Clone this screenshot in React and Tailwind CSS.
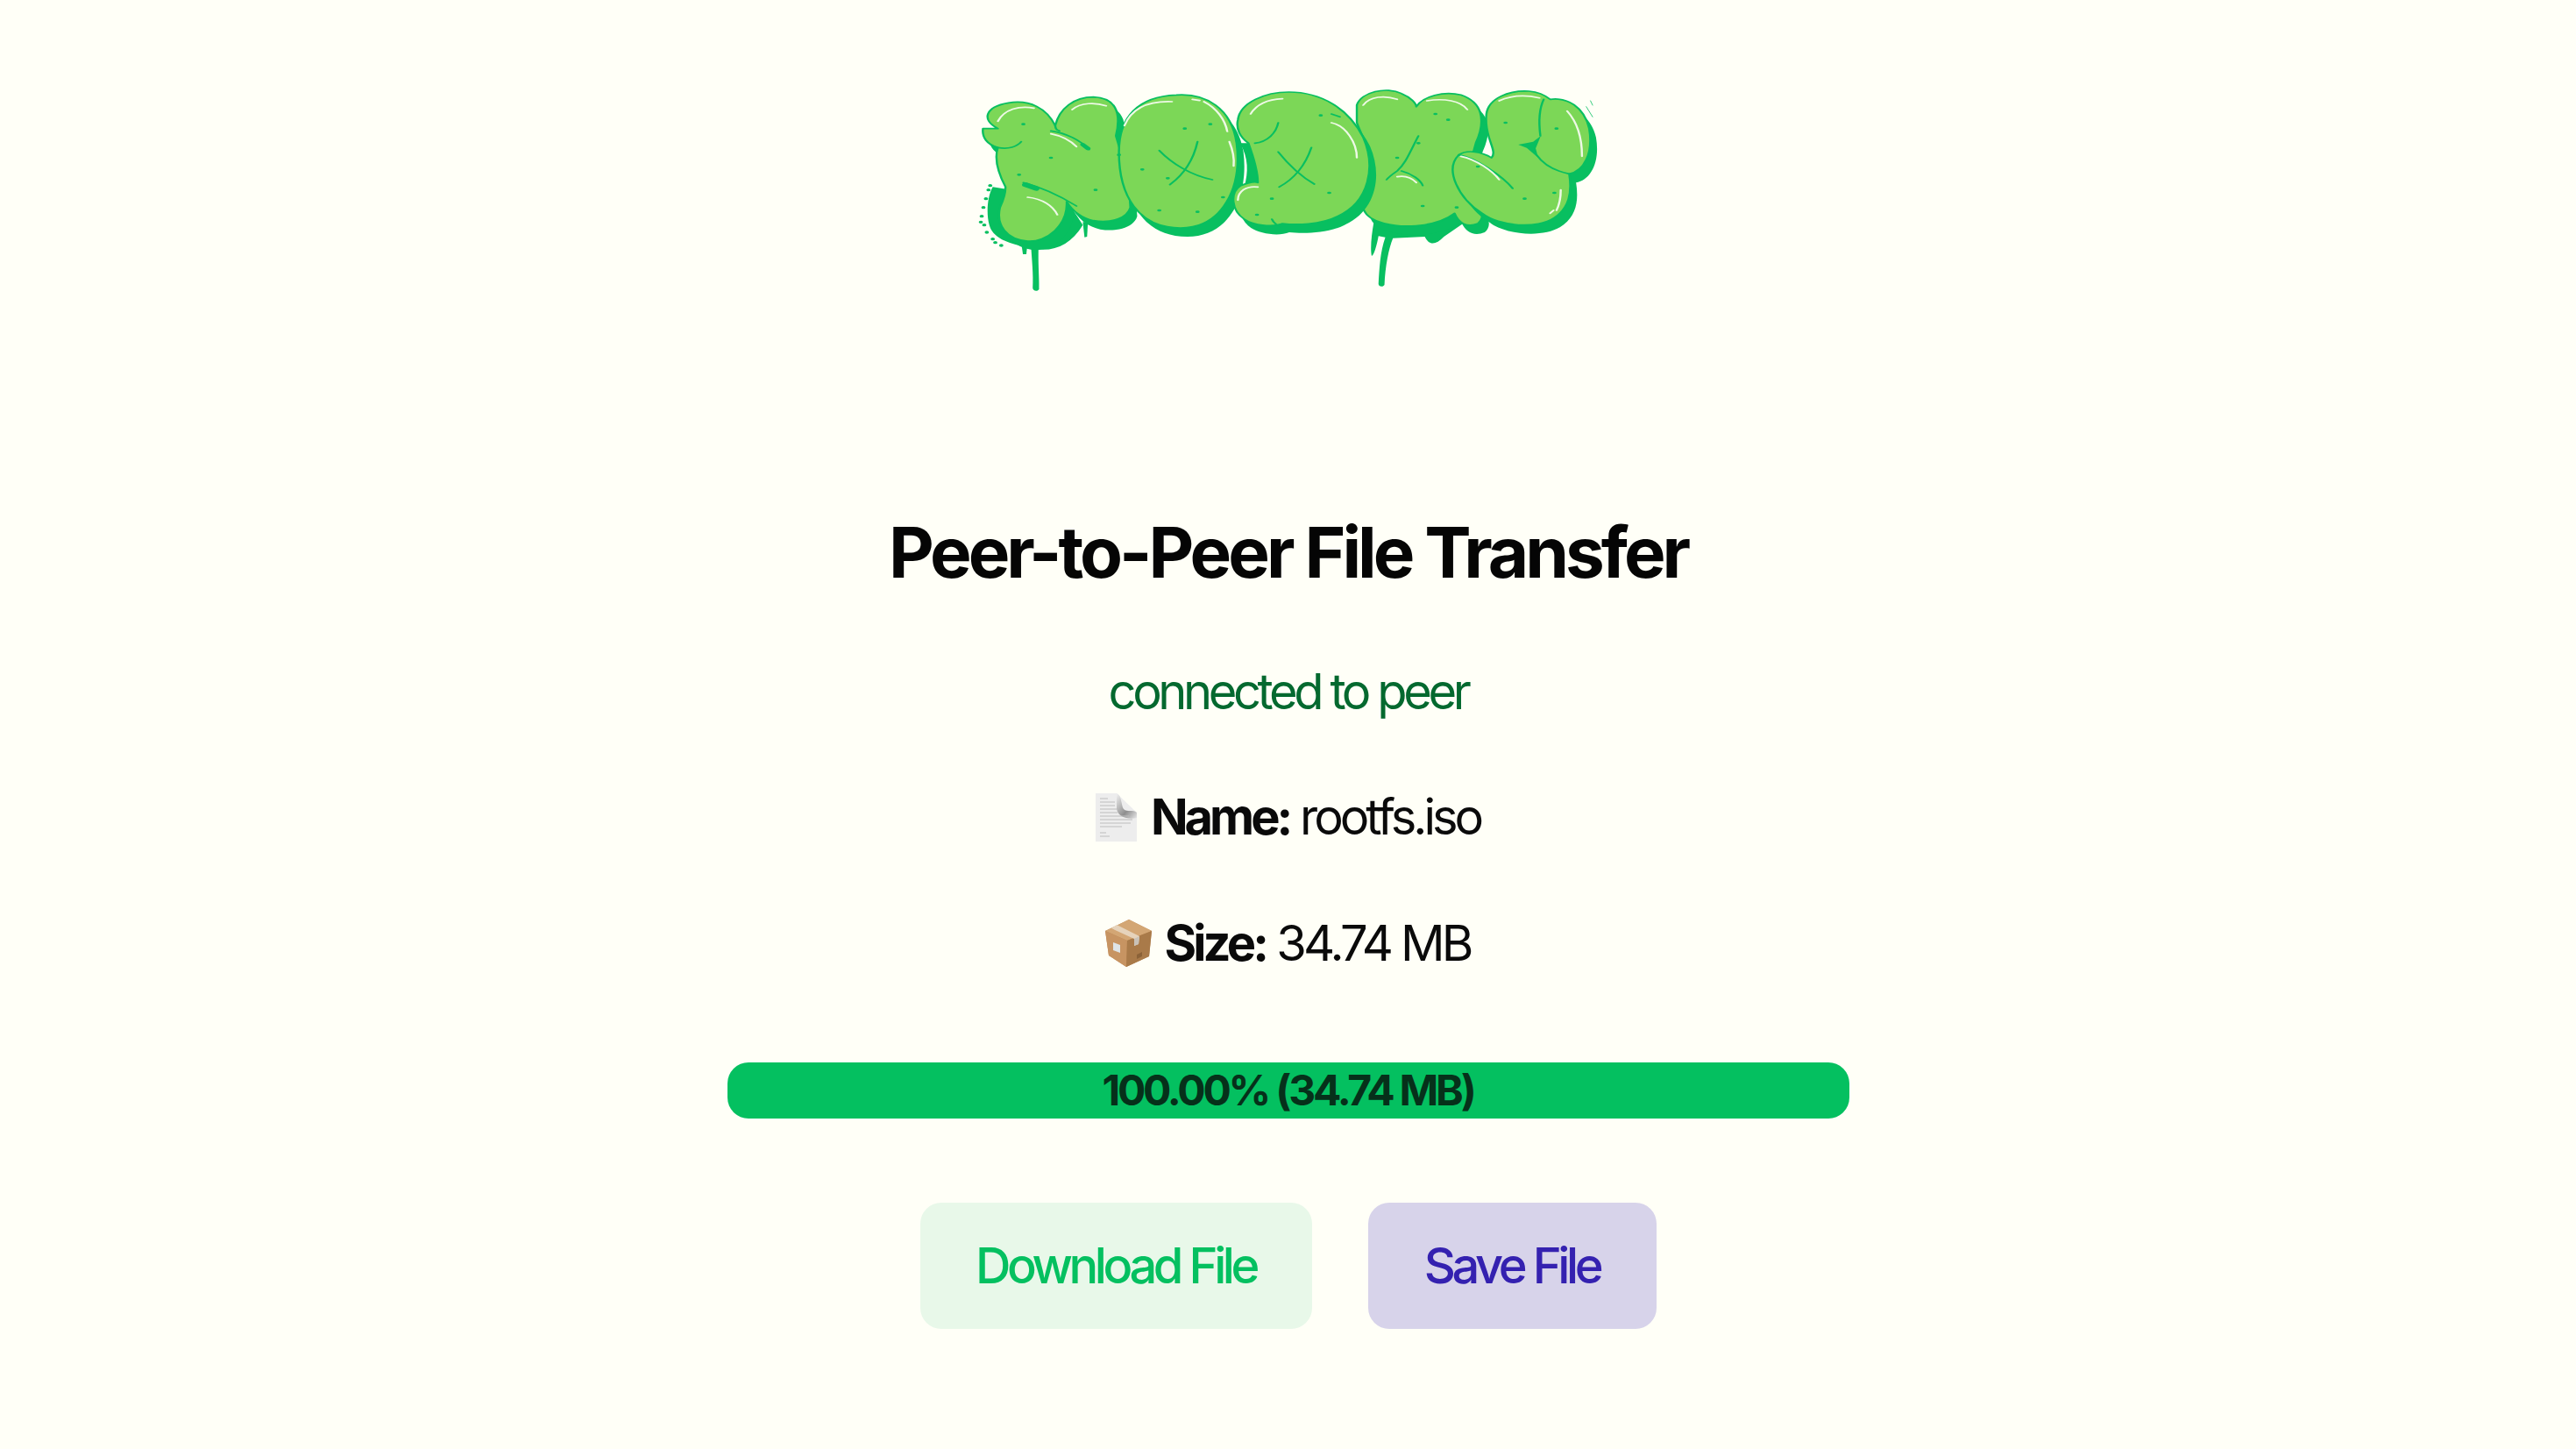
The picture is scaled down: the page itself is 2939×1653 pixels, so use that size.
const BODY = "#7cd757";
const DARK = "#08bf60";

// Letters in drawing order, so each one's shadow falls on the letter behind it.
const letters = [
  // N
  "M100 200 C60 170 70 125 125 112 C175 100 215 130 235 190 C245 130 280 92 325 92 C375 95 392 140 378 225 C395 300 410 400 412 470 C405 505 370 525 325 515 C295 505 275 480 262 450 C265 530 215 590 170 585 C120 580 95 530 105 470 C115 440 118 420 118 400 C100 350 92 300 100 265 C75 255 62 230 65 200 Z",
  // O
  "M385 280 C385 160 430 90 520 85 C590 78 650 130 662 250 C675 400 630 540 530 540 C430 540 385 430 385 280 Z",
  // U
  "M945 120 C955 75 1015 55 1050 80 C1072 93 1085 115 1085 125 C1100 90 1150 70 1190 85 C1240 110 1250 170 1225 250 C1215 300 1205 360 1200 420 C1240 460 1250 500 1230 525 C1205 540 1185 525 1175 490 C1130 540 1040 545 990 515 C950 490 950 440 975 390 C1000 330 960 240 945 180 Z",
  // D
  "M665 170 C670 110 730 75 785 75 C860 75 925 130 960 230 C990 330 975 450 900 500 C860 530 800 530 770 525 C745 540 700 530 680 510 C650 480 645 420 672 395 C690 385 705 380 712 385 C712 340 700 290 690 250 C670 230 660 200 665 170 Z",
  // S
  "M1250 150 C1255 95 1305 68 1350 72 C1375 75 1390 88 1400 100 C1440 92 1480 125 1492 200 C1502 285 1480 345 1445 355 C1452 420 1445 470 1410 505 C1370 545 1280 535 1240 490 C1185 440 1150 340 1185 290 C1205 270 1240 280 1262 300 C1272 285 1262 260 1256 230 C1250 200 1248 175 1250 150 Z",
];

const innerLines = [
  "M100 265 C125 272 145 262 155 245",
  "M225 208 C260 215 295 240 315 272",
  "M160 385 C200 400 240 425 285 465",
  "M235 190 C236 200 237 205 245 208",
  "M480 275 C510 320 555 360 605 375",
  "M570 245 C560 310 535 360 505 392",
  "M760 280 C785 325 815 365 845 390",
  "M838 265 C825 320 800 370 762 400",
  "M760 180 C755 215 735 245 705 250",
  "M1090 225 C1070 280 1060 320 1040 345 C1030 355 1020 365 1015 375",
  "M1050 345 C1075 355 1095 375 1100 395",
  "M1385 100 C1375 130 1373 180 1377 225",
  "M1368 290 C1385 325 1410 345 1445 355",
  "M1185 290 C1225 300 1290 365 1312 405",
  "M745 510 C748 520 755 530 765 535",
  "M885 150 L905 160",
];

const highlights = [
  "M100 175 C115 135 150 120 185 130",
  "M275 135 C295 110 330 110 355 122",
  "M225 218 C250 225 270 240 285 262",
  "M170 435 C205 440 230 465 240 495",
  "M398 190 C415 130 455 105 510 108",
  "M558 100 L575 104",
  "M585 108 C615 130 635 170 640 210",
  "M645 245 C652 270 657 300 655 328",
  "M695 150 C710 115 735 100 770 98",
  "M885 180 C920 190 945 250 945 300",
  "M665 445 C665 415 685 395 712 400",
  "M960 120 C975 90 1010 85 1040 100",
  "M1110 105 C1150 95 1190 105 1205 135",
  "M1040 365 C1060 360 1075 370 1085 385",
  "M1280 105 C1310 85 1345 85 1375 95",
  "M1440 140 C1465 180 1475 240 1475 295",
  "M1190 295 C1225 305 1265 345 1280 375",
  "M1425 410 C1425 440 1420 465 1415 480",
  "M1400 490 L1408 480",
];

const specks = [
  [160,185],[150,358],[385,290],[440,340],[500,370],[600,185],[570,485],[630,435],[1130,150],[1160,170],[1100,465],[1415,200],[1410,420],[710,495],[745,440],[880,420],[330,410],[225,300],[1040,300],[1230,330],[1180,470],[1340,440],[860,155],[540,200],[480,480],[1295,180],[1090,250],
];

const spray = [
  [78,410],[72,440],[66,470],[62,500],[68,530],[74,555],[88,578],[60,520],[82,395],[94,590],[108,600],
];

function Logo() {
  return (
    <svg viewBox="0 0 1568 810" preserveAspectRatio="none" className="block w-[760px] h-[270px]">
      <g fill={DARK}>
        <path d="M88 400 C72 440 72 520 86 550 C104 590 150 600 180 610 C230 625 270 600 300 530 L260 440 Z" />
        {spray.map(([x, y], i) => (
          <circle key={i} cx={x} cy={y} r="5" />
        ))}
        <path d="M178 600 L196 600 C194 650 198 720 197 750 C192 760 182 755 182 745 C184 700 180 650 178 600 Z" />
        <path d="M155 590 L170 590 L167 630 L159 630 Z" />
        <path d="M300 520 L312 520 L310 570 L304 572 Z" />
        <path d="M985 520 C980 560 976 610 980 636 C985 635 992 600 996 568 L1012 572 C1000 620 998 680 996 730 C995 740 1005 745 1010 735 C1012 670 1020 610 1030 575 L1105 570 C1115 600 1130 600 1150 570 L1200 520 Z" />
        <path d="M670 250 L720 250 C715 300 720 360 722 400 L680 400 C690 350 690 300 670 250 Z" />
      </g>
      {letters.map((d, i) => (
        <g key={i}>
          <path d={d} fill={DARK} transform="translate(16 30)" />
          <path d={d} fill={BODY} stroke={DARK} strokeWidth="5" strokeLinejoin="round" />
        </g>
      ))}
      <g fill="none" stroke={DARK} strokeWidth="5" strokeLinecap="round">
        {innerLines.map((d, i) => (
          <path key={i} d={d} />
        ))}
        <path d="M165 392 L190 405" strokeWidth="16" />
        <path d="M300 255 L312 268" strokeWidth="12" />
        <path d="M1495 105 L1500 120 M1485 125 L1500 160" strokeWidth="2" />
      </g>
      <path d="M1325 255 L1360 245 L1378 225 L1366 268 L1372 300 L1345 266 Z" fill={DARK} />
      <g fill="none" stroke="#eef9e6" strokeWidth="5" strokeLinecap="round">
        {highlights.map((d, i) => (
          <path key={i} d={d} />
        ))}
      </g>
      <g fill={DARK}>
        {specks.map(([x, y], i) => (
          <ellipse key={i} cx={x} cy={y} rx="5" ry="4" />
        ))}
      </g>
    </svg>
  );
}

function DocIcon() {
  return (
    <svg viewBox="0 0 47 55" className="w-[47px] h-[55px] shrink-0">
      <defs>
        <linearGradient id="fold" x1="0" y1="0" x2="1" y2="1">
          <stop offset="0" stopColor="#f2f2f2" />
          <stop offset="0.6" stopColor="#8e8e8e" />
          <stop offset="1" stopColor="#e6e6e6" />
        </linearGradient>
      </defs>
      <path d="M0 0 H24 L47 22 V55 H0 Z" fill="#ededed" />
      <path d="M24 0 C30 2 29 14 32 18 C36 22 43 18 47 22 V28 C38 30 26 28 24 18 Z" fill="url(#fold)" />
      <g stroke="#bdbdbd" strokeWidth="1">
        <path d="M5 6 H14 M5 10 H22 M5 14 H22 M5 18 H24 M5 22 H25 M5 26 H38 M5 30 H42 M5 34 H40 M5 38 H30 M5 45 H12 M5 49 H16" />
      </g>
    </svg>
  );
}

function BoxIcon() {
  return (
    <svg viewBox="0 0 53 54" className="w-[53px] h-[54px] shrink-0">
      <path d="M27 0 L53 13 L50 42 L24 54 L4 41 L0 13 Z" fill="#b98855" />
      <path d="M27 0 L53 13 L25 24 L0 13 Z" fill="#d3a674" />
      <path d="M0 13 L25 24 L24 54 L4 41 Z" fill="#c79462" />
      <path d="M25 24 L53 13 L50 42 L24 54 Z" fill="#a97a49" />
      <path d="M13 6 L39 19 L38 28 L33 30 L33 22 L7 10 Z" fill="#e6d3bb" />
      <path d="M33 22 L39 19 L38 28 L33 30 Z" fill="#c9c2b8" />
      <path d="M9 26 L17 29 L17 38 L9 35 Z" fill="#dfe4e6" />
      <path d="M36 40 L42 37 L42 42 L36 45 Z" fill="#8b6238" />
    </svg>
  );
}

export default function App() {
  return (
    <div className="min-h-screen bg-[#fffff7] flex flex-col items-center pt-[80px] font-['Inter',sans-serif] text-[#0a0a0a] tracking-[-4px]">
      <Logo />
      <h1 className="mt-[235px] text-[80px] leading-[90px] font-bold text-[#050505]">
        Peer-to-Peer File Transfer
      </h1>
      <p className="mt-[82px] text-[56px] leading-[64px] tracking-[-4.4px] text-[#04692f]">connected to peer</p>
      <div className="mt-[79px] flex items-center gap-[16px] text-[56px] leading-[64px]">
        <DocIcon />
        <p>
          <strong className="font-bold">Name:</strong> rootfs.iso
        </p>
      </div>
      <div className="mt-[80px] flex items-center gap-[14px] text-[56px] leading-[64px] tracking-[-3.8px]">
        <BoxIcon />
        <p>
          <strong className="font-bold">Size:</strong> 34.74 MB
        </p>
      </div>
      <div className="mt-[104px] w-[1280px] h-[64px] rounded-[24px] bg-[#04c060] flex items-center justify-center text-[48px] font-bold tracking-[-3.2px] text-[#06301a]">
        100.00% (34.74 MB)
      </div>
      <div className="mt-[96px] flex gap-[64px]">
        <button className="w-[447px] h-[144px] rounded-[24px] bg-[#e8f8e9] text-[56px] font-medium tracking-[-4.4px] text-[#04c060]">
          Download File
        </button>
        <button className="w-[329px] h-[144px] rounded-[24px] bg-[#d7d3ea] text-[56px] font-medium tracking-[-4.4px] text-[#3421b0]">
          Save File
        </button>
      </div>
    </div>
  );
}
